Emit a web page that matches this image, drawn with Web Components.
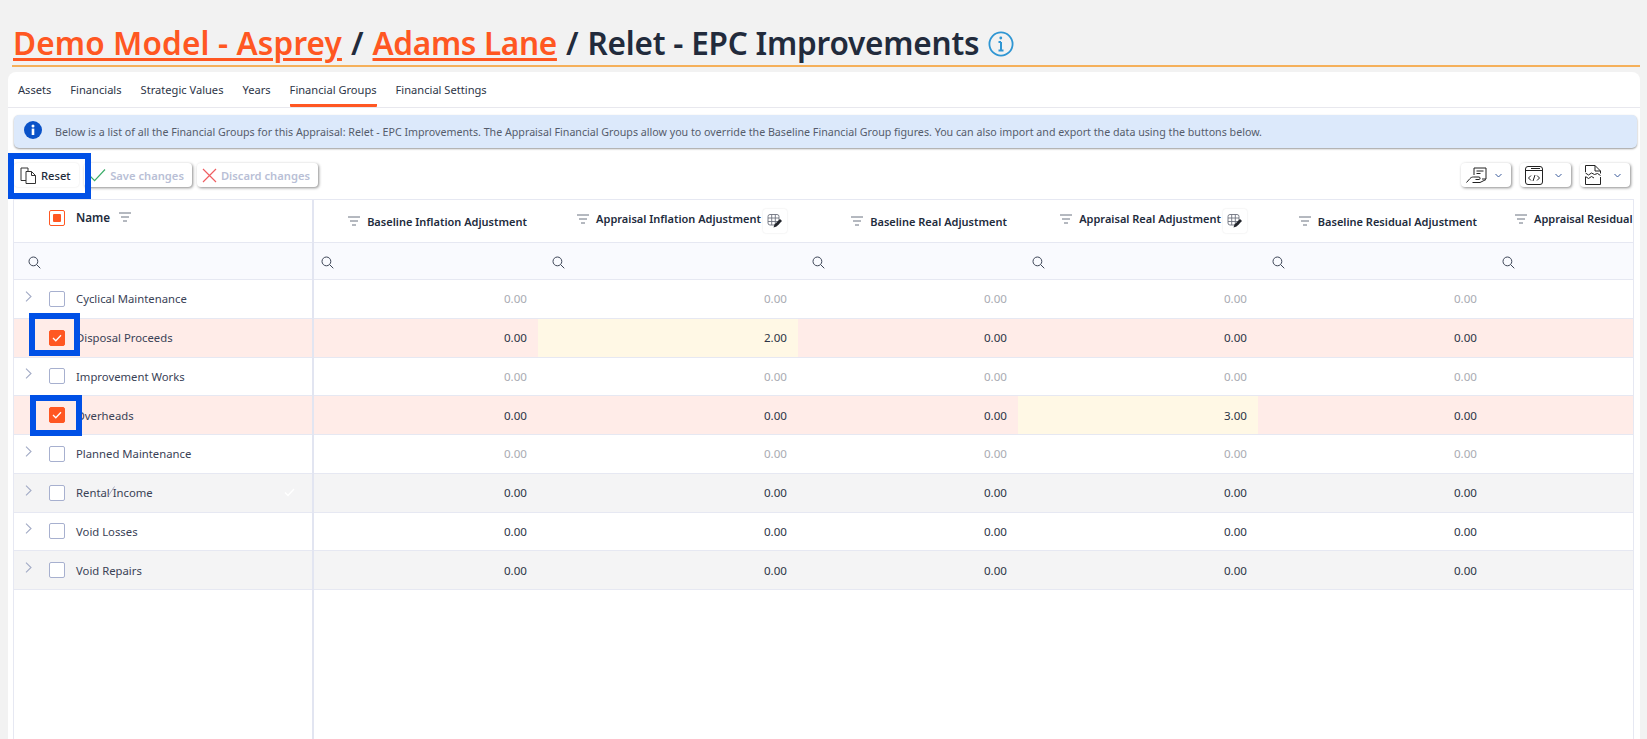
<!DOCTYPE html>
<html>
<head>
<meta charset="utf-8">
<style>
  html, body { margin: 0; height: 739px; overflow: hidden; background: #f2f2f2; }
  body { font-family: "Noto Sans", "Liberation Sans", sans-serif; color: #222b3c; }
</style>
</head>
<body>
<fg-app></fg-app>
<script>
const ICONS = {
  info: `<svg width="26" height="26" viewBox="0 0 26 26" fill="none" stroke="#2f96d3"><circle cx="13" cy="13" r="11.600" stroke-width="1.800"/><path d="M13 11v8.500M10.500 11H13M10.500 19.500h5" stroke-width="2"/><circle cx="12.800" cy="7" r="1.400" fill="#2f96d3" stroke="none"/></svg>`,
  infoFill: `<svg width="18" height="18" viewBox="0 0 18 18"><circle cx="9" cy="9" r="9" fill="#0a52c8"/><rect x="7.700" y="7.600" width="2.600" height="6.400" fill="#fff"/><circle cx="9" cy="4.900" r="1.500" fill="#fff"/></svg>`,
  filter: `<svg width="12" height="10" viewBox="0 0 12 10" fill="none" stroke="#6b7280" stroke-width="1"><path d="M0 1h12M2 5h8M4 9h4"/></svg>`,
  search: `<svg width="13" height="13" viewBox="0 0 13 13" fill="none" stroke="#3d4556" stroke-width="1"><circle cx="5.400" cy="5.400" r="4.400"/><path d="M8.600 8.600l3.700 3.700"/></svg>`,
  chevron: `<svg width="7" height="11" viewBox="0 0 7 11" fill="none" stroke="#a3abc6" stroke-width="1.100"><path d="M1 .7l5 4.800-5 4.800"/></svg>`,
  copy: `<svg width="17" height="17" viewBox="0 0 17 17" fill="none" stroke="#333" stroke-width="1"><path d="M6 13.500H1V1h7v3"/><path d="M6 4.500h5.500l4 4v8H6zM11.500 4.500v4h4"/></svg>`,
  tick: `<svg width="17" height="14" viewBox="0 0 17 14" fill="none" stroke="#3dae6b" stroke-width="1.200"><path d="M1 8l4.600 4.600L16 1.500"/></svg>`,
  cross: `<svg width="15" height="15" viewBox="0 0 15 15" fill="none" stroke="#ef5f62" stroke-width="1.200"><path d="M1 1l13 13M14 1L1 14"/></svg>`,
  down: `<svg width="7" height="5" viewBox="0 0 7 5" fill="none" stroke="#3a5a9a" stroke-width="1"><path d="M.5 1l3 3 3-3"/></svg>`,
  hand: `<svg width="21" height="17" viewBox="0 0 21 17" fill="none" stroke="#222" stroke-width="1"><path d="M8 8V1h12v11h-4"/><path d="M10.500 4h7M10.500 6.500h4"/><path d="M.5 15.500L4 11.500c1-1 2-1.500 3.500-1.500H13c1.500 0 1.500 2.500 0 2.500H9.500M6.500 15.500H14l6-3"/></svg>`,
  code: `<svg width="18" height="19" viewBox="0 0 18 19" fill="none" stroke="#222" stroke-width="1"><rect x=".5" y=".5" width="17" height="18" rx="2.500"/><path d="M.5 4.500h17M6 2.500h9"/><path d="M6 9.500l-2.500 2.500L6 14.500M12 9.500l2.500 2.500-2.500 2.500M10 9l-2 6"/></svg>`,
  chart: `<svg width="16" height="20" viewBox="0 0 16 20" fill="none" stroke="#222" stroke-width="1"><path d="M.5 7V.5h9.500l5.500 5.500V8.500M.5 12v7.500h15V12"/><path d="M10 .5V6h5.500"/><path d="M.5 8l3 2 3-2 3 1.500 3-1 3 2M.5 11.500l3 2 3-2 2.500 1.500"/></svg>`,
  edit: `<svg width="16" height="16" viewBox="0 0 16 16" fill="none"><g stroke="#6f7480" stroke-width=".9"><rect x="1" y="1.500" width="11" height="10.500" rx="2"/><path d="M1 5h11M1 8.500h11M4.700 1.500V12M8.300 1.500V12"/></g><path d="M6.500 14.500l1-3 5.500-5.500 2 2-5.500 5.500z" fill="#23262c"/></svg>`,
  cbTick: `<svg width="10" height="8" viewBox="0 0 10 8" fill="none" stroke="#fff" stroke-width="1.300"><path d="M1 4l2.800 2.800L9 1.200"/></svg>`,
  faintTick: `<svg width="11" height="9" viewBox="0 0 11 9" fill="none" stroke="#fff" stroke-width="1.300"><path d="M1 4.500l3 3L10 1"/></svg>`
};

class FgTitle extends HTMLElement {
  constructor() {
    super();
    this.attachShadow({ mode: 'open' });
  }
  connectedCallback() {
    this.shadowRoot.innerHTML = `
      <style>
        :host { display: block; margin: 0 7px 5px 12px; height: 65px; border-bottom: 2px solid #f5b05a; }
        .t { display: flex; align-items: center; height: 65px; padding: 20px 0 0 1px; box-sizing: border-box;
             font-size: 31.500px; font-weight: 600; color: #222b3c; white-space: pre; line-height: 44px; }
        a { color: #ff5722; text-decoration: underline; text-underline-offset: 3px; text-decoration-thickness: 2.500px; }
        .d { letter-spacing: .15px; }
        .l { letter-spacing: -.3px; }
        .r { letter-spacing: -.2px; }
        .s { margin: 0 .8px; }
        svg { margin-left: 9px; margin-top: 2px; flex: none; }
      </style>
      <div class="t"><a class="d">Demo Model - Asprey</a><span class="s"> / </span><a class="l">Adams Lane</a><span class="s"> / </span><span class="r">Relet - EPC Improvements</span>${ICONS.info}</div>`;
  }
}
customElements.define('fg-title', FgTitle);

class FgTabs extends HTMLElement {
  constructor() {
    super();
    this.attachShadow({ mode: 'open' });
  }
  connectedCallback() {
    const tabs = ['Assets', 'Financials', 'Strategic Values', 'Years', 'Financial Groups', 'Financial Settings'];
    this.shadowRoot.innerHTML = `
      <style>
        :host { display: flex; gap: 19px; height: 36px; box-sizing: border-box; padding-left: 10px; border-bottom: 1px solid #e8e8ee; font-size: 11.120px; color: #2d3547; }
        div { line-height: 36px; height: 35px; box-sizing: border-box; white-space: nowrap; }
        .on { border-bottom: 3px solid #ff5722; border-radius: 1px; }
      </style>
      ${tabs.map(t => `<div class="${t === 'Financial Groups' ? 'on' : ''}">${t}</div>`).join('')}`;
  }
}
customElements.define('fg-tabs', FgTabs);

class FgBanner extends HTMLElement {
  constructor() {
    super();
    this.attachShadow({ mode: 'open' });
  }
  connectedCallback() {
    this.shadowRoot.innerHTML = `
      <style>
        :host { display: flex; align-items: center; height: 33px; margin: 7px 3px 0 6px; padding-left: 10px; gap: 13px;
                background: #dce9fb; border-radius: 5px; box-shadow: 0 1px 2px rgba(0,0,0,.4);
                font-size: 10.680px; color: #555c6b; white-space: nowrap; overflow: hidden; }
        svg { flex: none; margin-top: -4px; }
      </style>
      ${ICONS.infoFill}<span><slot></slot></span>`;
  }
}
customElements.define('fg-banner', FgBanner);

class FgButton extends HTMLElement {
  constructor() {
    super();
    this.attachShadow({ mode: 'open' });
  }
  connectedCallback() {
    const icon = this.getAttribute('icon');
    this.shadowRoot.innerHTML = `
      <style>
        :host { display: inline-flex; align-items: center; height: 24px; background: #fff; border-radius: 4px; box-sizing: border-box;
                box-shadow: 1px 1px 3px rgba(0,0,0,.45); font-size: 11.200px; font-weight: 500; white-space: nowrap; padding: 0 8px 0 5px; gap: 4px; }
        :host([flat]) { box-shadow: 0 0 2px rgba(0,0,0,.12); padding: 0 8.500px 0 6px; }
        :host([disabled]) { color: #b9bfd6; font-weight: 600; }
        :host([menu]) { width: 50.500px; padding: 0 9px 0 5px; justify-content: space-between; }
      </style>
      ${ICONS[icon]}<slot></slot>${this.hasAttribute('menu') ? ICONS.down : ''}`;
  }
}
customElements.define('fg-button', FgButton);

class FgToolbar extends HTMLElement {
  constructor() {
    super();
    this.attachShadow({ mode: 'open' });
  }
  connectedCallback() {
    this.shadowRoot.innerHTML = `
      <style>
        :host { display: flex; align-items: center; gap: 5px; height: 24px; margin: 15px 10px 12px 6px; }
        ::slotted(fg-button[menu]) { margin-left: 4px; }
      </style>
      <slot></slot>`;
  }
}
customElements.define('fg-toolbar', FgToolbar);

class FgCheck extends HTMLElement {
  constructor() {
    super();
    this.attachShadow({ mode: 'open' });
  }
  connectedCallback() {
    const state = this.getAttribute('state') || 'off';
    const inner = state === 'on' ? ICONS.cbTick : state === 'some' ? '<i></i>' : '';
    this.shadowRoot.innerHTML = `
      <style>
        :host { display: flex; align-items: center; justify-content: center; width: 16px; height: 16px; box-sizing: border-box;
                border: 1px solid #a7b0cf; border-radius: 2px; background: #fff; flex: none; }
        :host([state=on]) { background: #ff5722; border-color: #ff5722; }
        :host([state=some]) { border-color: #ff5722; }
        i { width: 8px; height: 8px; background: #ff5722; border-radius: 1px; }
      </style>${inner}`;
  }
}
customElements.define('fg-check', FgCheck);

// left frozen column: one row per group
class FgNameRow extends HTMLElement {
  constructor() {
    super();
    this.attachShadow({ mode: 'open' });
  }
  connectedCallback() {
    const on = this.getAttribute('tone') === 'sel';
    const hint = this.hasAttribute('hint');
    this.shadowRoot.innerHTML = `
      <style>
        :host { display: flex; align-items: center; height: 38.750px; box-sizing: border-box; border-bottom: 1px solid #e6e8f2;
                font-size: 11.300px; color: #3a4256; position: relative; }
        :host([tone=sel]) { background: #ffece8; }
        :host([tone=alt]) { background: #f4f4f5; }
        .c { width: 7px; height: 11px; margin: -5px 17px 0 11px; display: flex; }
        fg-check { margin-right: 11px; }
        .hint { margin-left: auto; margin-right: 17px; display: flex; }
        .slash { position: absolute; left: 94px; top: 12px; }
      </style>
      <div class="c">${on ? '' : ICONS.chevron}</div>
      <fg-check state="${on ? 'on' : 'off'}"></fg-check>
      <span><slot></slot></span>
      ${hint ? `<div class="hint">${ICONS.faintTick}</div><svg class="slash" width="7" height="10" viewBox="0 0 7 10" fill="none" stroke="#a8aec4" stroke-width="1"><path d="M.5 9.500L6.500.5"/></svg>` : ''}`;
  }
}
customElements.define('fg-name-row', FgNameRow);

class FgValueRow extends HTMLElement {
  constructor() {
    super();
    this.attachShadow({ mode: 'open' });
  }
  connectedCallback() {
    const vals = (this.getAttribute('values') || '').split(',');
    const edited = (this.getAttribute('edited') || '').split(',');
    this.shadowRoot.innerHTML = `
      <style>
        :host { display: grid; grid-template-columns: var(--cols); height: 38.750px; box-sizing: border-box; border-bottom: 1px solid #e6e8f2;
                font-size: 11.600px; color: #2c3446; }
        :host([tone=sel]) { background: #ffece8; }
        :host([tone=alt]) { background: #f4f4f5; }
        :host([tone=dim]) { color: #a9abb2; }
        div { display: flex; align-items: center; justify-content: flex-end; padding: 0 11px 0 0; box-sizing: border-box; }
        .ed { background: #fff8e5; }
      </style>
      ${vals.map((v, i) => `<div class="${edited.includes(String(i)) ? 'ed' : ''}">${i === 5 ? '' : v}</div>`).join('')}`;
  }
}
customElements.define('fg-value-row', FgValueRow);

class FgColHead extends HTMLElement {
  constructor() {
    super();
    this.attachShadow({ mode: 'open' });
  }
  connectedCallback() {
    const appraisal = this.hasAttribute('editable');
    this.shadowRoot.innerHTML = `
      <style>
        :host { display: flex; align-items: center; justify-content: flex-end; gap: 7px; padding: 0 11px 0 0; box-sizing: border-box;
                font-size: 11px; font-weight: 600; color: #222b3c; white-space: nowrap; min-width: 0; overflow: hidden; }
        :host([editable]) { padding: 0 11px 5px 0; }
        :host([clip]) { justify-content: flex-start; padding: 0 0 5px 27px; }
        .e { width: 24px; height: 24px; display: flex; align-items: center; justify-content: center; background: #fff; margin-left: -5px;
             box-shadow: 0 0 2px rgba(0,0,0,.12); border-radius: 3px; flex: none; margin-top: 5px; }
        svg { flex: none; }
      </style>
      ${ICONS.filter}<span><slot></slot></span>${appraisal ? `<div class="e">${ICONS.edit}</div>` : ''}`;
  }
}
customElements.define('fg-col-head', FgColHead);

class FgGrid extends HTMLElement {
  constructor() {
    super();
    this.attachShadow({ mode: 'open' });
  }
  connectedCallback() {
    const cols = [
      ['Baseline Inflation Adjustment'], ['Appraisal Inflation Adjustment', 'editable'],
      ['Baseline Real Adjustment'], ['Appraisal Real Adjustment', 'editable'],
      ['Baseline Residual Adjustment'], ['Appraisal Residual', 'clip']
    ];
    const rows = [
      ['Cyclical Maintenance', 'dim', [0, 0, 0, 0, 0], ''],
      ['Disposal Proceeds', 'sel', [0, 2, 0, 0, 0], '1'],
      ['Improvement Works', 'dim', [0, 0, 0, 0, 0], ''],
      ['Overheads', 'sel', [0, 0, 0, 3, 0], '3'],
      ['Planned Maintenance', 'dim', [0, 0, 0, 0, 0], ''],
      ['Rental Income', 'alt', [0, 0, 0, 0, 0], ''],
      ['Void Losses', '', [0, 0, 0, 0, 0], ''],
      ['Void Repairs', 'alt', [0, 0, 0, 0, 0], '']
    ];
    const fmt = v => v.map(n => n.toFixed(2)).join(',') + ',';
    const nameTone = t => (t === 'dim' ? '' : t);
    this.shadowRoot.innerHTML = `
      <style>
        :host { display: flex; --cols: 224px 260px 220px 240px 230px 146px; height: 540px; margin: 0 6px 0 5px;
                border: 1px solid #e6e8f2; border-bottom: 0; box-sizing: border-box; background: #fff; overflow: hidden; }
        .left { flex: none; border-right: 2px solid #e2e5f1; width: 298px; }
        .right { flex: 1; min-width: 0; overflow: hidden; }
        .h { height: 43px; border-bottom: 1px solid #e6e8f2; box-sizing: border-box; }
        .right .h { display: grid; grid-template-columns: var(--cols); }
        .left .h { display: flex; align-items: center; font-size: 11.700px; font-weight: 600; padding: 0 0 8px 35px; color: #222b3c; }
        .left .h fg-check { margin-right: 11px; margin-top: 2px; }
        .left .h svg { margin-left: 9px; }
        .f { height: 37px; background: #f9fafe; border-bottom: 1px solid #e6e8f2; box-sizing: border-box; }
        .right .f { display: grid; grid-template-columns: var(--cols); }
        .f div, .left .f { display: flex; align-items: center; padding-left: 14px; padding-top: 2px; box-sizing: border-box; }
        .f div:first-child { padding-left: 7px; }
      </style>
      <div class="left">
        <div class="h"><fg-check state="some"></fg-check>Name${ICONS.filter}</div>
        <div class="f">${ICONS.search}</div>
        ${rows.map(r => `<fg-name-row tone="${nameTone(r[1])}" ${r[0] === 'Rental Income' ? 'hint' : ''}>${r[0]}</fg-name-row>`).join('')}
      </div>
      <div class="right">
        <div class="h">${cols.map(c => `<fg-col-head ${c[1] || ''}>${c[0]}</fg-col-head>`).join('')}</div>
        <div class="f">${cols.map(() => `<div>${ICONS.search}</div>`).join('')}</div>
        ${rows.map(r => `<fg-value-row tone="${r[1]}" values="${fmt(r[2])}" edited="${r[3]}"></fg-value-row>`).join('')}
      </div>`;
  }
}
customElements.define('fg-grid', FgGrid);

class FgApp extends HTMLElement {
  constructor() {
    super();
    this.attachShadow({ mode: 'open' });
  }
  connectedCallback() {
    this.shadowRoot.innerHTML = `
      <style>
        :host { display: block; height: 739px; position: relative; overflow: hidden; }
        .card { margin: 0 7px 0 8px; background: #fff; border-radius: 8px 8px 0 0; height: 667px; overflow: hidden; }
        .mark { position: absolute; border: 6px solid #0050e6; box-sizing: border-box; }
      </style>
      <fg-title></fg-title>
      <div class="card">
        <fg-tabs></fg-tabs>
        <fg-banner>Below is a list of all the Financial Groups for this Appraisal: Relet - EPC Improvements. The Appraisal Financial Groups allow you to override the Baseline Financial Group figures. You can also import and export the data using the buttons below.</fg-banner>
        <fg-toolbar>
          <fg-button icon="copy" flat>Reset</fg-button>
          <fg-button icon="tick" disabled>Save changes</fg-button>
          <fg-button icon="cross" disabled>Discard changes</fg-button>
          <div style="flex:1"></div>
          <fg-button icon="hand" menu></fg-button>
          <fg-button icon="code" menu></fg-button>
          <fg-button icon="chart" menu></fg-button>
        </fg-toolbar>
        <fg-grid></fg-grid>
      </div>
      <div class="mark" style="left:8px;top:153px;width:83px;height:46px"></div>
      <div class="mark" style="left:28.500px;top:313px;width:51px;height:43px"></div>
      <div class="mark" style="left:30px;top:395px;width:52px;height:41px"></div>`;
  }
}
customElements.define('fg-app', FgApp);
</script>
</body>
</html>
